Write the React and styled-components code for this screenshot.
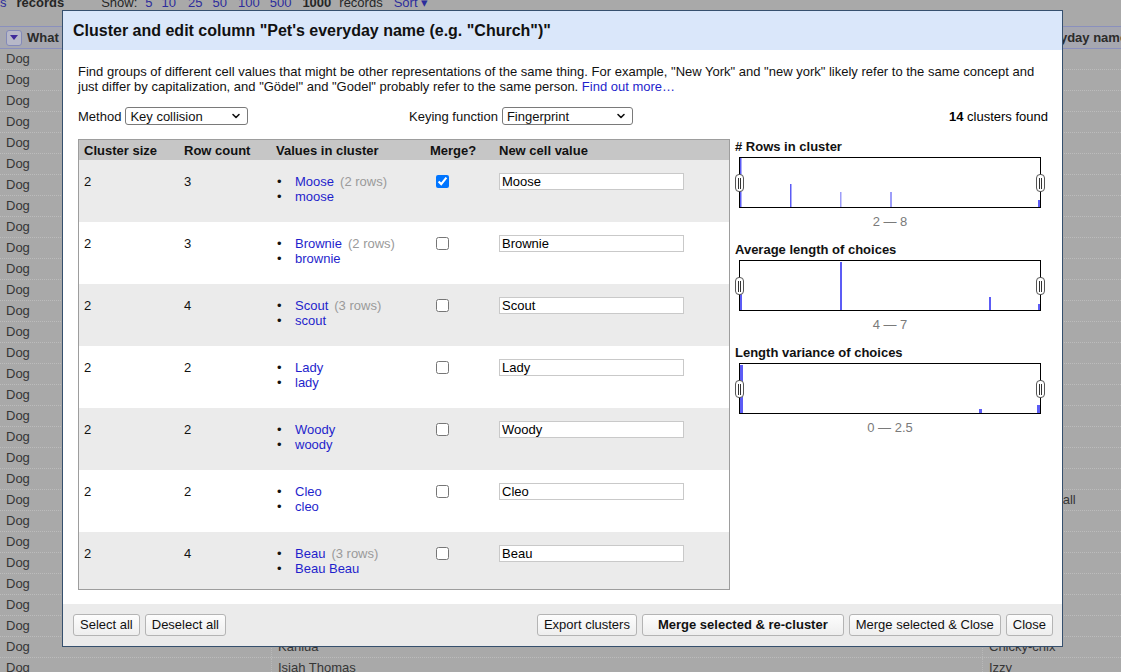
import React from "react";
import styled, { createGlobalStyle } from "styled-components";
import { ChevronDown } from "lucide-react";

const GlobalStyle = createGlobalStyle`
  html, body {
    margin: 0;
    padding: 0;
  }
  body {
    width: 1121px;
    height: 672px;
    overflow: hidden;
    background: #a9a9a9;
    font-family: "Liberation Sans", Arial, sans-serif;
    font-size: 13px;
    color: #000;
  }
`;

const Page = styled.div`
  position: relative;
  width: 1121px;
  height: 672px;
  overflow: hidden;
`;

const TopBar = styled.div`
  height: 31px;
  margin-top: -5px;
  display: flex;
  align-items: flex-start;
  line-height: 15px;
  color: #333;
  white-space: nowrap;
`;

const BarLink = styled.span`
  color: #2c2c9c;
  margin-right: ${(p) => p.gap || 10}px;
`;

const BarText = styled.span`
  font-weight: ${(p) => (p.bold ? "bold" : "normal")};
  margin-right: ${(p) => p.gap || 10}px;
  color: #262626;
`;

const GridHead = styled.div`
  display: grid;
  grid-template-columns: 272px 711px 1fr;
  height: 21px;
  border-top: 1px solid #8a90bd;
  border-bottom: 1px solid #8a90bd;
  background: #a6a7b0;
`;

const HeadCell = styled.div`
  display: flex;
  align-items: center;
  gap: ${(p) => p.gap ?? 5}px;
  padding-left: ${(p) => p.pad ?? 6}px;
  font-weight: bold;
  color: #2b2b2b;
  white-space: nowrap;
  overflow: hidden;
`;

const DropBtn = styled.span`
  width: 14px;
  height: 14px;
  border: 1px solid #8389b8;
  border-radius: 3px;
  background: #b7b8c8;
  display: flex;
  align-items: center;
  justify-content: center;
  flex: none;
  &::after {
    content: "";
    border-left: 4px solid transparent;
    border-right: 4px solid transparent;
    border-top: 5px solid #3f2a9a;
  }
`;

const DataRow = styled.div`
  display: grid;
  grid-template-columns: 272px 711px 1fr;
  height: 20px;
  border-bottom: 1px dotted #bcbcbc;
`;

const DataCell = styled.div`
  padding-left: 6px;
  line-height: 20px;
  color: #363636;
  white-space: nowrap;
  overflow: hidden;
  border-right: ${(p) => (p.divide ? "1px dotted #b8b8b8" : "none")};
`;

/* ---------- dialog ---------- */

const Dialog = styled.div`
  position: absolute;
  left: 62px;
  top: 10px;
  width: 1001px;
  height: 637px;
  box-sizing: border-box;
  border: 1px solid #36506e;
  background: #fff;
  display: flex;
  flex-direction: column;
`;

const DialogHeader = styled.div`
  height: 39px;
  flex: none;
  background: #dae7fa;
  display: flex;
  align-items: center;
  padding-left: 10px;
  font-size: 16px;
  font-weight: bold;
  color: #111;
`;

const DialogBody = styled.div`
  flex: 1;
  padding: 14px 14px 0 15px;
  display: flex;
  flex-direction: column;
`;

const Description = styled.p`
  margin: 0;
  line-height: 15px;
  color: #111;
`;

const Link = styled.a`
  color: #1f1fcc;
  text-decoration: none;
`;

const Controls = styled.div`
  display: grid;
  grid-template-columns: 331px 1fr auto;
  align-items: center;
  margin-top: 12px;
  height: 20px;
`;

const Field = styled.label`
  display: flex;
  align-items: center;
  gap: 4px;
  color: #111;
`;

const SelectBox = styled.div`
  width: ${(p) => p.w}px;
  height: 18px;
  box-sizing: border-box;
  border: 1px solid #7a7a7a;
  border-radius: 3px;
  background: #fff;
  display: flex;
  align-items: center;
  justify-content: space-between;
  padding: 0 5px 0 4px;
  color: #111;
`;

const Found = styled.div`
  text-align: right;
  b {
    font-weight: bold;
  }
`;

const Main = styled.div`
  display: flex;
  gap: 5px;
  margin-top: 13px;
`;

const TableBox = styled.div`
  width: 652px;
  height: 451px;
  box-sizing: border-box;
  border: 1px solid #9d9d9d;
  overflow: hidden;
  background: #ebebeb;
`;

const cols = "100px 92px 154px 69px 1fr";

const TableHead = styled.div`
  display: grid;
  grid-template-columns: ${cols};
  height: 20px;
  align-items: center;
  background: #c6c6c6;
  font-weight: bold;
  color: #111;
  & > div {
    padding-left: 5px;
  }
`;

const ClusterRow = styled.div`
  display: grid;
  grid-template-columns: ${cols};
  height: 62px;
  box-sizing: border-box;
  padding-top: 14px;
  background: ${(p) => (p.odd ? "#ffffff" : "#ebebeb")};
  line-height: 15px;
  color: #111;
`;

const Cell = styled.div`
  padding-left: 5px;
`;

const ValueList = styled.ul`
  list-style: none;
  margin: 0;
  padding: 0;
`;

const ValueItem = styled.li`
  display: flex;
  &::before {
    content: "•";
    width: 18px;
    padding-left: 1px;
    color: #111;
  }
`;

const Choice = styled.span`
  color: #1f1fcc;
`;

const RowsNote = styled.span`
  color: #9a9a9a;
  margin-left: 6px;
`;

const Check = styled.input`
  margin: 1px 0 0 6px;
  width: 13px;
  height: 13px;
`;

const ValueInput = styled.input`
  width: 185px;
  height: 17px;
  box-sizing: border-box;
  margin: -1px 0 0 0;
  border: 1px solid #c9c9c9;
  padding: 0 2px;
  font-family: "Liberation Sans", Arial, sans-serif;
  font-size: 13px;
  color: #000;
  outline: none;
`;

const Facets = styled.div`
  width: 313px;
  display: flex;
  flex-direction: column;
`;

const Facet = styled.div`
  margin-bottom: 13px;
`;

const FacetTitle = styled.div`
  font-weight: bold;
  line-height: 15px;
  color: #111;
`;

const Histogram = styled.div`
  position: relative;
  margin: 3px 0 0 4px;
  width: 302px;
  height: 51px;
  box-sizing: border-box;
  border: 1px solid #000;
  background: #fff;
  svg {
    display: block;
  }
`;

const Handle = styled.span`
  position: absolute;
  top: 16px;
  left: ${(p) => (p.right ? "auto" : "-5px")};
  right: ${(p) => (p.right ? "-5px" : "auto")};
  width: 7px;
  height: 16px;
  border: 1px solid #555;
  border-radius: 4px;
  background: #fff;
  display: flex;
  justify-content: center;
  align-items: center;
  gap: 1px;
  &::before,
  &::after {
    content: "";
    width: 1px;
    height: 11px;
    background: #333;
  }
`;

const Range = styled.div`
  margin: 6px 0 0 4px;
  width: 302px;
  text-align: center;
  color: #7a7a7a;
  line-height: 15px;
`;

const Footer = styled.div`
  height: 42px;
  flex: none;
  box-sizing: border-box;
  background: #ebebeb;
  display: flex;
  align-items: center;
  justify-content: space-between;
  padding: 0 9px 1px 10px;
`;

const ButtonGroup = styled.div`
  display: flex;
  gap: 5px;
`;

const Button = styled.button`
  height: 22px;
  box-sizing: border-box;
  padding: 0 ${(p) => (p.primary ? 15 : 6)}px;
  border: 1px solid #b4b4b4;
  border-radius: 3px;
  background: linear-gradient(#fdfdfd, #eeeeee);
  font-family: "Liberation Sans", Arial, sans-serif;
  font-size: 13px;
  font-weight: ${(p) => (p.primary ? "bold" : "normal")};
  color: #111;
`;

const clusters = [
  { size: 2, count: 3, values: [["Moose", 2], ["moose"]], merge: true },
  { size: 2, count: 3, values: [["Brownie", 2], ["brownie"]] },
  { size: 2, count: 4, values: [["Scout", 3], ["scout"]] },
  { size: 2, count: 2, values: [["Lady"], ["lady"]] },
  { size: 2, count: 2, values: [["Woody"], ["woody"]] },
  { size: 2, count: 2, values: [["Cleo"], ["cleo"]] },
  { size: 2, count: 4, values: [["Beau", 3], ["Beau Beau"]] },
];

const facets = [
  {
    title: "# Rows in cluster",
    range: "2 — 8",
    bars: [
      [0, 1.5, 0, 1],
      [50, 1.5, 26, 1],
      [100, 1.5, 34, 0.6],
      [150, 2, 34, 0.6],
      [298, 2, 42, 1],
    ],
  },
  {
    title: "Average length of choices",
    range: "4 — 7",
    bars: [
      [0, 2, 32, 1],
      [100, 2, 1, 1],
      [249, 2, 36, 1],
      [298, 2, 43, 1],
    ],
  },
  {
    title: "Length variance of choices",
    range: "0 — 2.5",
    bars: [
      [0, 3, 1, 1],
      [239, 3, 45, 1],
      [297, 3, 41, 1],
    ],
  },
];

const col2 = { 28: "Kahlua", 29: "Isiah Thomas" };
const col3 = { 21: "Misty Snowball", 28: "Chicky-chix", 29: "Izzy" };

const App = () => {
  const rows = Array.from({ length: 30 }, (_, i) => i);

  return (
    <Page>
      <GlobalStyle />
      <TopBar>
        <BarLink gap={10}>s</BarLink>
        <BarText bold gap={37}>records</BarText>
        <BarText gap={8}>Show:</BarText>
        <BarLink gap={9}>5</BarLink>
        <BarLink gap={12}>10</BarLink>
        <BarLink>25</BarLink>
        <BarLink gap={11}>50</BarLink>
        <BarLink>100</BarLink>
        <BarLink gap={11}>500</BarLink>
        <BarText bold gap={8}>1000</BarText>
        <BarText gap={11}>records</BarText>
        <BarLink>Sort ▾</BarLink>
      </TopBar>
      <GridHead>
        <HeadCell>
          <DropBtn />
          What kind of pet?
        </HeadCell>
        <HeadCell>
          <DropBtn />
          Pet's official name
        </HeadCell>
        <HeadCell pad={0} gap={0}>
          <DropBtn />
          Pet's everyday name
        </HeadCell>
      </GridHead>
      {rows.map((i) => (
        <DataRow key={i}>
          <DataCell divide>Dog</DataCell>
          <DataCell divide>{col2[i] || ""}</DataCell>
          <DataCell>{col3[i] || ""}</DataCell>
        </DataRow>
      ))}

      <Dialog>
        <DialogHeader>
          Cluster and edit column "Pet's everyday name (e.g. "Church")"
        </DialogHeader>
        <DialogBody>
          <Description>
            Find groups of different cell values that might be other
            representations of the same thing. For example, "New York" and
            "new york" likely refer to the same concept and just differ by
            capitalization, and "Gödel" and "Godel" probably refer to the same
            person. <Link href="#">Find out more…</Link>
          </Description>
          <Controls>
            <Field>
              Method
              <SelectBox w={123}>
                Key collision
                <ChevronDown size={12} strokeWidth={3.2} color="#111" />
              </SelectBox>
            </Field>
            <Field>
              Keying function
              <SelectBox w={131}>
                Fingerprint
                <ChevronDown size={12} strokeWidth={3.2} color="#111" />
              </SelectBox>
            </Field>
            <Found>
              <b>14</b> clusters found
            </Found>
          </Controls>
          <Main>
            <TableBox>
              <TableHead>
                <div>Cluster size</div>
                <div>Row count</div>
                <div>Values in cluster</div>
                <div>Merge?</div>
                <div>New cell value</div>
              </TableHead>
              {clusters.map((c, i) => (
                <ClusterRow key={i} odd={i % 2 === 1}>
                  <Cell>{c.size}</Cell>
                  <Cell>{c.count}</Cell>
                  <Cell>
                    <ValueList>
                      {c.values.map(([v, n]) => (
                        <ValueItem key={v}>
                          <Choice>{v}</Choice>
                          {n && <RowsNote>({n} rows)</RowsNote>}
                        </ValueItem>
                      ))}
                    </ValueList>
                  </Cell>
                  <Cell>
                    <Check type="checkbox" defaultChecked={!!c.merge} />
                  </Cell>
                  <Cell>
                    <ValueInput type="text" defaultValue={c.values[0][0]} />
                  </Cell>
                </ClusterRow>
              ))}
            </TableBox>
            <Facets>
              {facets.map((f) => (
                <Facet key={f.title}>
                  <FacetTitle>{f.title}</FacetTitle>
                  <Histogram>
                    <svg width="300" height="49" viewBox="0 0 300 49">
                      {f.bars.map(([x, w, y, o], k) => (
                        <rect
                          key={k}
                          x={x}
                          y={y}
                          width={w}
                          height={49 - y}
                          fill="#5c5cf5"
                          opacity={o}
                        />
                      ))}
                    </svg>
                    <Handle />
                    <Handle right />
                  </Histogram>
                  <Range>{f.range}</Range>
                </Facet>
              ))}
            </Facets>
          </Main>
        </DialogBody>
        <Footer>
          <ButtonGroup>
            <Button>Select all</Button>
            <Button>Deselect all</Button>
          </ButtonGroup>
          <ButtonGroup>
            <Button>Export clusters</Button>
            <Button primary>Merge selected &amp; re-cluster</Button>
            <Button>Merge selected &amp; Close</Button>
            <Button>Close</Button>
          </ButtonGroup>
        </Footer>
      </Dialog>
    </Page>
  );
};

export default App;
